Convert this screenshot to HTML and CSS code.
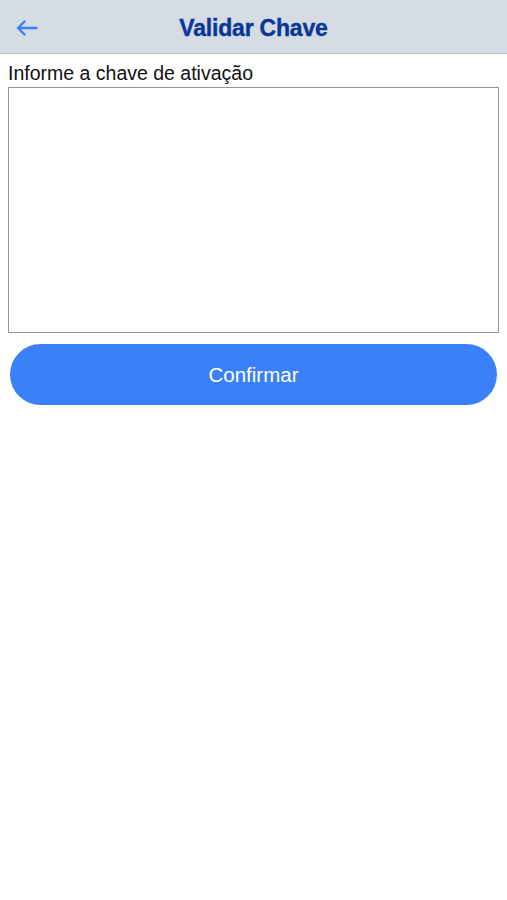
FILE: index.html
```html
<!DOCTYPE html>
<html lang="pt">
<head>
<meta charset="utf-8">
<title>Validar Chave</title>
<link rel="stylesheet" href="styles.css">
</head>
<body>
<header class="topbar">
  <button class="back" aria-label="Voltar">
    <svg width="22" height="16" viewBox="0 0 22 16" fill="none" stroke="#3c82f6" stroke-width="2.4" stroke-linecap="round" stroke-linejoin="round">
      <path d="M20.5 8H2M8.5 1.5L2 8l6.5 6.5"/>
    </svg>
  </button>
  <h1 class="title">Validar Chave</h1>
</header>
<main class="content">
  <label class="label" for="chave">Informe a chave de ativação</label>
  <textarea id="chave" class="key"></textarea>
  <button class="confirm">Confirmar</button>
</main>
</body>
</html>
```
FILE: styles.css
```css
html, body {
  margin: 0;
  padding: 0;
  background: #ffffff;
  font-family: "Liberation Sans", Arial, sans-serif;
}
.topbar {
  box-sizing: border-box;
  height: 54px;
  padding-top: 3px;
  background: #d5dce3;
  border-bottom: 1px solid #b9bfc5;
  display: flex;
  align-items: center;
  justify-content: center;
  position: relative;
}
.back {
  position: absolute;
  left: 16px;
  top: 20px;
  padding: 0;
  border: none;
  background: none;
  display: flex;
}
.title {
  margin: 0;
  font-size: 23px;
  font-weight: bold;
  color: #0a3796;
  letter-spacing: -0.2px;
  -webkit-text-stroke: 0.4px #0a3796;
}
.content {
  display: flex;
  flex-direction: column;
  padding: 7px 8px 0 8px;
}
.label {
  font-size: 19.5px;
  color: #111111;
  line-height: 24px;
  margin-bottom: 2px;
}
.key {
  box-sizing: border-box;
  width: 100%;
  height: 246px;
  border: 1px solid #959595;
  resize: none;
  margin: 0;
  font-size: 16px;
}
.confirm {
  margin: 11px 2px 0 2px;
  height: 61px;
  border: none;
  border-radius: 31px;
  background: #3a80f8;
  color: #ffffff;
  font-family: "Liberation Sans", Arial, sans-serif;
  font-size: 20.5px;
}
```
